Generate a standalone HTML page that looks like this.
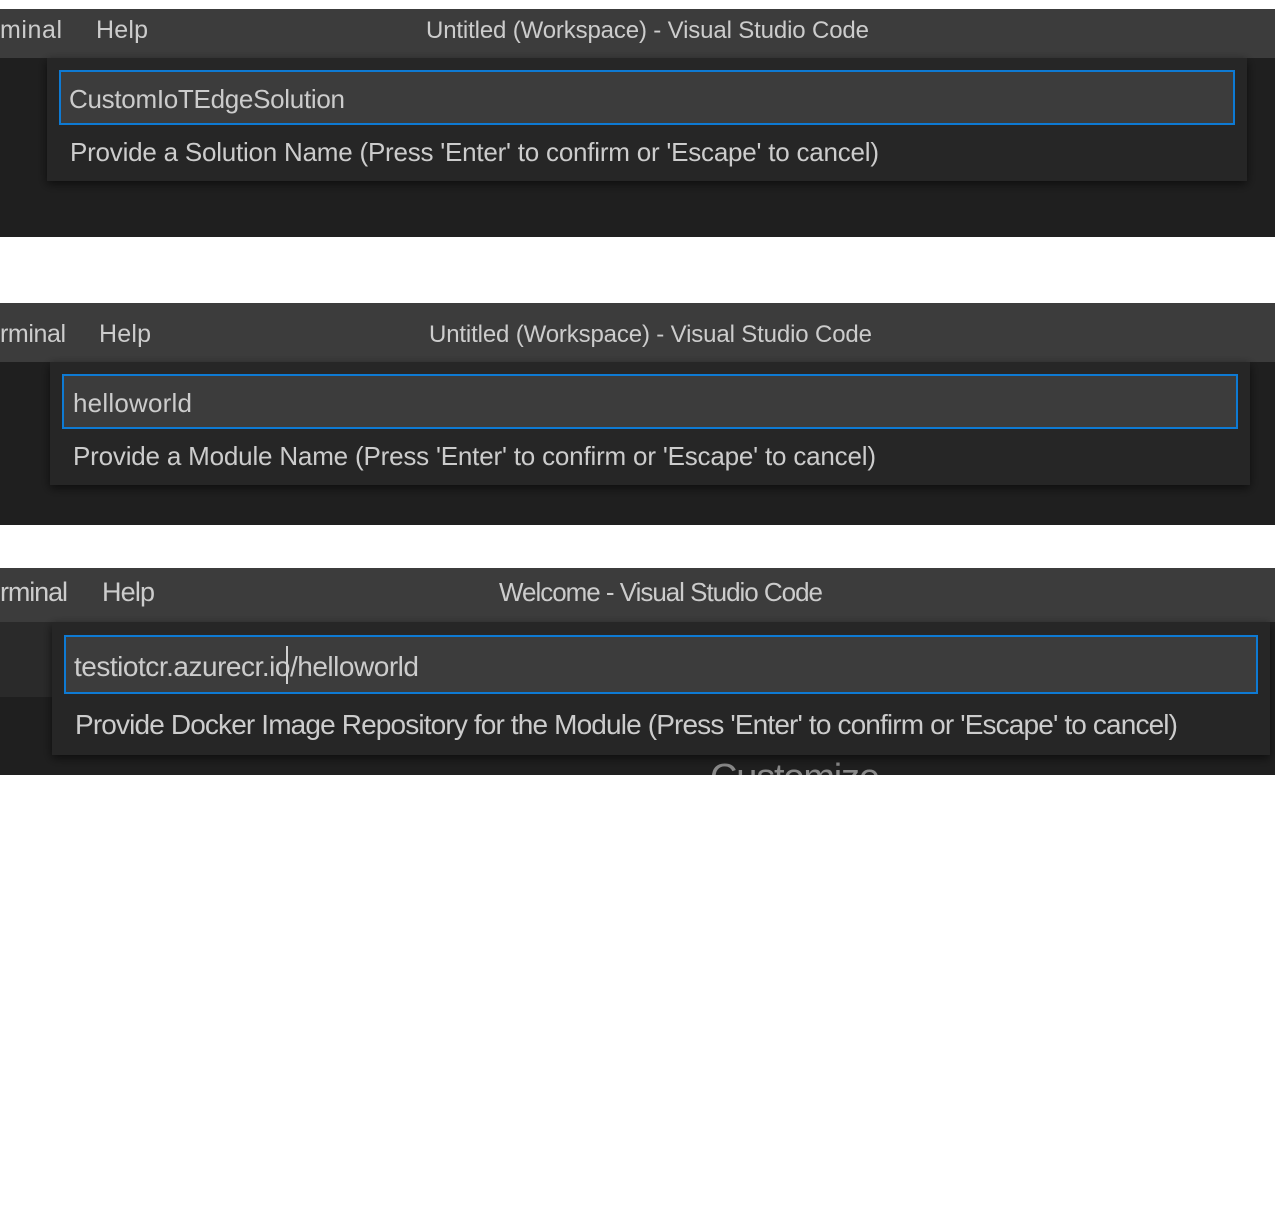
<!DOCTYPE html>
<html><head><meta charset="utf-8"><style>
html,body{margin:0;padding:0;background:#fff;width:1275px;height:1232px;overflow:hidden}
svg{display:block}
text{font-family:"Liberation Sans",sans-serif;fill:#cccccc}
</style></head><body>
<svg width="1275" height="1232" viewBox="0 0 1275 1232" xmlns="http://www.w3.org/2000/svg">
<defs>
<filter id="sh" x="-5%" y="-20%" width="110%" height="150%"><feDropShadow dx="0" dy="3" stdDeviation="5" flood-color="#000" flood-opacity="0.6"/></filter>
<clipPath id="c3"><rect x="0" y="568" width="1275" height="207"/></clipPath>
</defs>
<!-- Panel 1 -->
<rect x="0" y="9" width="1275" height="228" fill="#1f1f1f"/>
<rect x="0" y="9" width="1275" height="49" fill="#3c3c3c"/>
<text x="0" y="38" font-size="25" textLength="62">minal</text>
<text x="96" y="38" font-size="25" textLength="52">Help</text>
<text x="426" y="38" font-size="24" textLength="443">Untitled (Workspace) - Visual Studio Code</text>
<rect x="47" y="58" width="1200" height="123" fill="#252526" filter="url(#sh)"/>
<rect x="60" y="71" width="1174" height="53" fill="#3c3c3c" stroke="#0e7ad3" stroke-width="2"/>
<text x="69" y="108" font-size="26" textLength="276">CustomIoTEdgeSolution</text>
<text x="70" y="161" font-size="26" textLength="809">Provide a Solution Name (Press 'Enter' to confirm or 'Escape' to cancel)</text>
<!-- Panel 2 -->
<rect x="0" y="303" width="1275" height="222" fill="#1f1f1f"/>
<rect x="0" y="303" width="1275" height="59" fill="#3c3c3c"/>
<text x="0" y="342" font-size="25" textLength="66">rminal</text>
<text x="99" y="342" font-size="25" textLength="52">Help</text>
<text x="429" y="342" font-size="24" textLength="443">Untitled (Workspace) - Visual Studio Code</text>
<rect x="50" y="362" width="1200" height="123" fill="#252526" filter="url(#sh)"/>
<rect x="63" y="375" width="1174" height="53" fill="#3c3c3c" stroke="#0e7ad3" stroke-width="2"/>
<text x="73" y="412" font-size="26" textLength="119">helloworld</text>
<text x="73" y="465" font-size="26" textLength="803">Provide a Module Name (Press 'Enter' to confirm or 'Escape' to cancel)</text>
<!-- Panel 3 -->
<g clip-path="url(#c3)">
<rect x="0" y="568" width="1275" height="207" fill="#1f1f1f"/>
<rect x="0" y="622" width="60" height="75" fill="#2a2a2a"/>
<rect x="0" y="568" width="1275" height="54" fill="#3c3c3c"/>
<text x="0" y="601" font-size="27" textLength="68">rminal</text>
<text x="102" y="601" font-size="27" textLength="53">Help</text>
<text x="499" y="601" font-size="26" textLength="324">Welcome - Visual Studio Code</text>
<text x="710" y="790" font-size="38" textLength="170" style="fill:#8a8a8a">Customize</text>
<rect x="52" y="622" width="1218" height="133" fill="#252526" filter="url(#sh)"/>
<rect x="65" y="636" width="1192" height="57" fill="#3c3c3c" stroke="#0e7ad3" stroke-width="2"/>
<text x="74" y="676" font-size="28" textLength="345">testiotcr.azurecr.io/helloworld</text>
<rect x="286" y="646" width="2" height="38" fill="#d0d0d0"/>
<text x="75" y="734" font-size="28" textLength="1103">Provide Docker Image Repository for the Module (Press 'Enter' to confirm or 'Escape' to cancel)</text>
</g>
</svg>
</body></html>
